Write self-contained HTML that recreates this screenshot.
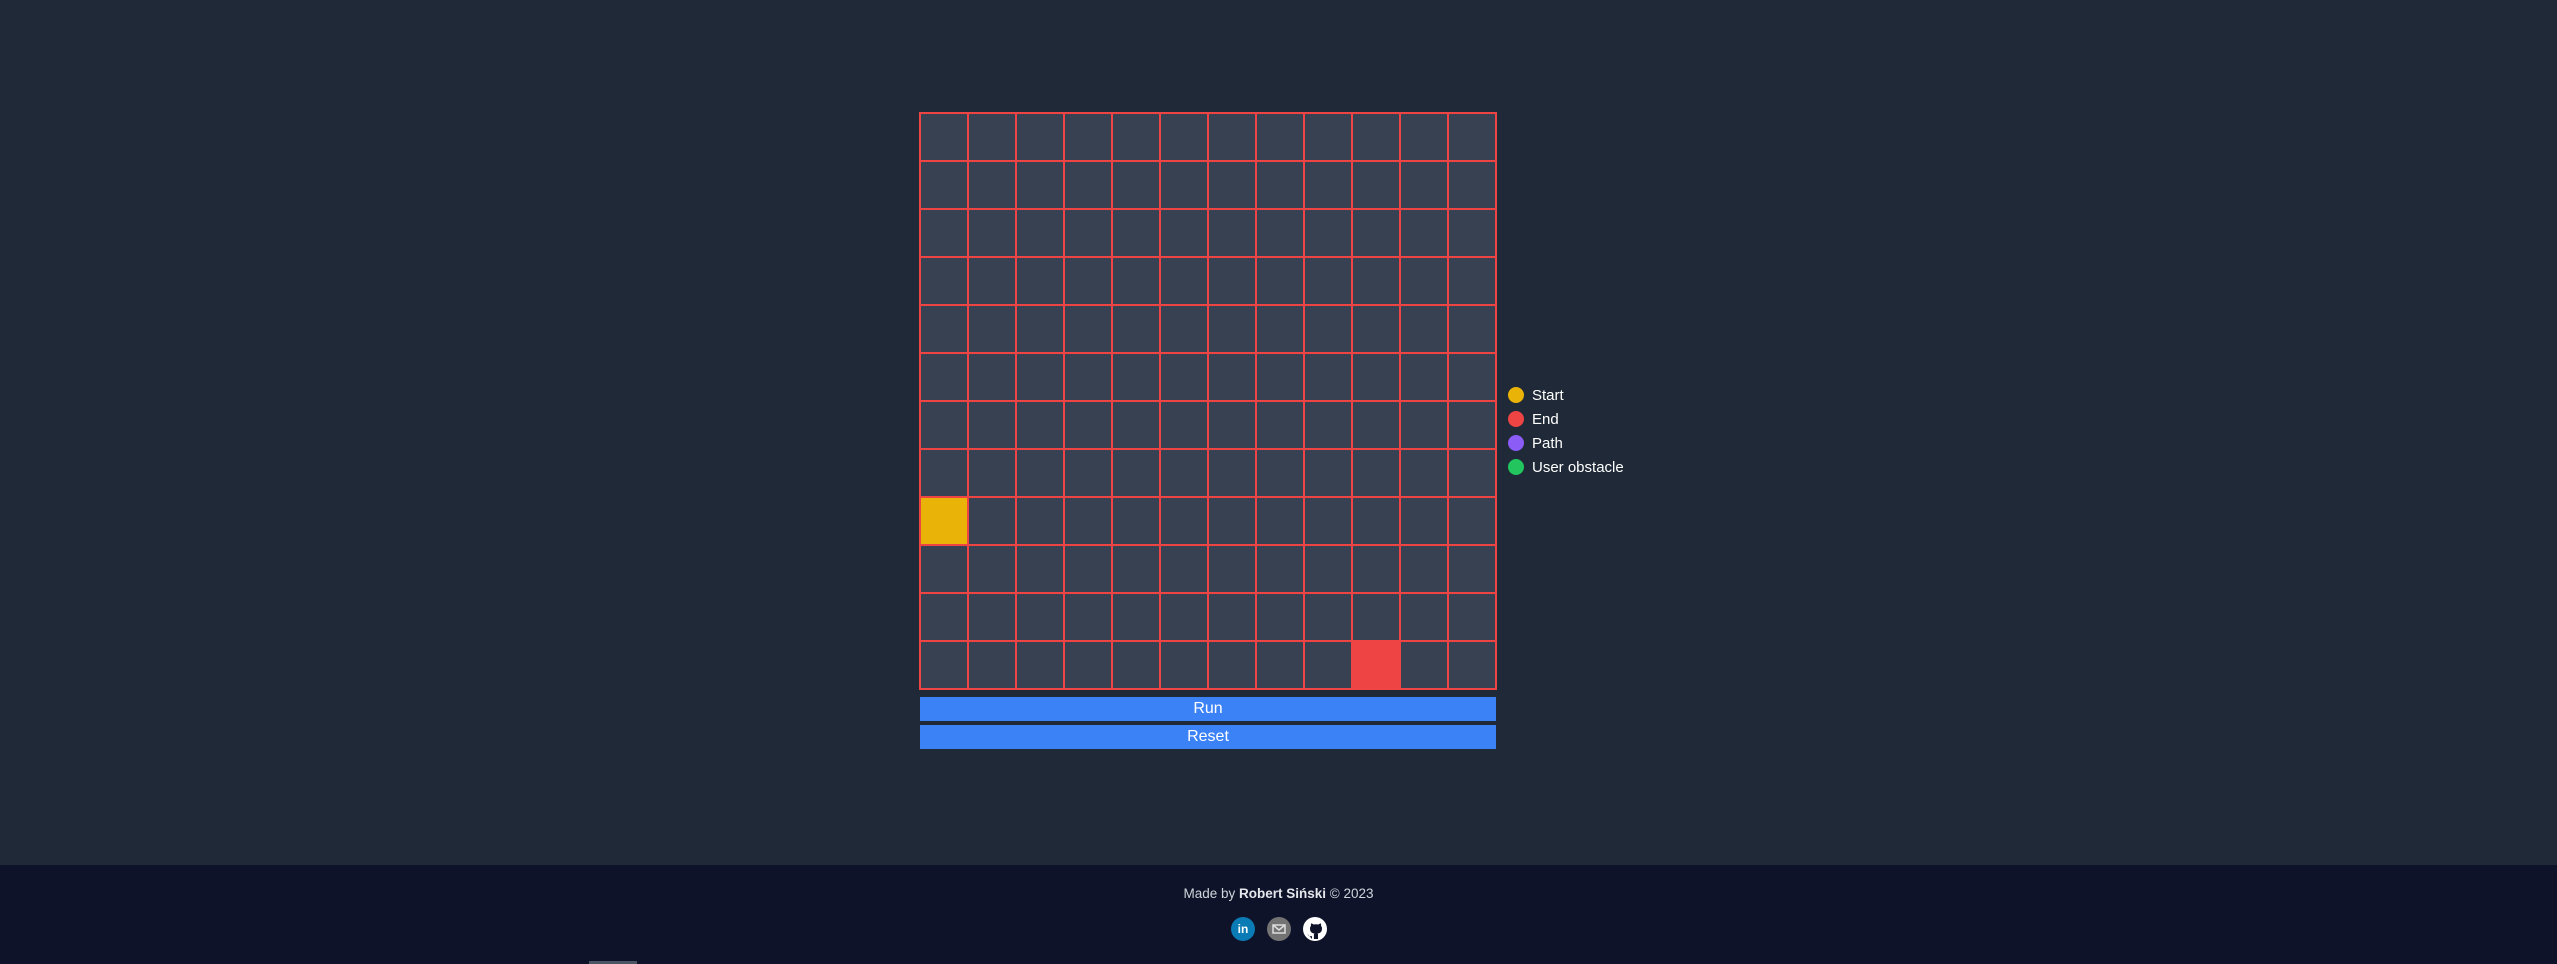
<!DOCTYPE html>
<html><head><meta charset="utf-8"><style>
*{margin:0;padding:0;box-sizing:border-box}
body{width:2557px;height:964px;background:#1f2937;font-family:"Liberation Sans",sans-serif;position:relative;overflow:hidden}
#grid{position:absolute;left:919px;top:112px;width:578px;height:578px;background:#ef4444;display:grid;grid-template-columns:repeat(12,46px);grid-template-rows:repeat(12,46px);gap:2px;padding:2px}
#grid div{background:#374151}
#grid div.s{background:#eab308}
#grid div.e{background:#ef4444}
.btn{position:absolute;left:920px;width:576px;height:24px;background:#3b82f6;color:#fff;font-size:16px;text-align:center;line-height:24px}
.leg{position:absolute;left:1508px;color:#fff;font-size:15px;line-height:24px;height:24px}
.leg span{display:inline-block;width:16px;height:16px;border-radius:50%;vertical-align:-3px;margin-right:8px}
footer{position:absolute;left:0;top:865px;width:2557px;height:99px;background:#0e1329;color:#d1d5db;font-size:13.5px;text-align:center}
.ic{position:absolute;top:917px;width:24px;height:24px;border-radius:50%}
</style></head><body>
<div id="grid">
<div></div><div></div><div></div><div></div><div></div><div></div><div></div><div></div><div></div><div></div><div></div><div></div>
<div></div><div></div><div></div><div></div><div></div><div></div><div></div><div></div><div></div><div></div><div></div><div></div>
<div></div><div></div><div></div><div></div><div></div><div></div><div></div><div></div><div></div><div></div><div></div><div></div>
<div></div><div></div><div></div><div></div><div></div><div></div><div></div><div></div><div></div><div></div><div></div><div></div>
<div></div><div></div><div></div><div></div><div></div><div></div><div></div><div></div><div></div><div></div><div></div><div></div>
<div></div><div></div><div></div><div></div><div></div><div></div><div></div><div></div><div></div><div></div><div></div><div></div>
<div></div><div></div><div></div><div></div><div></div><div></div><div></div><div></div><div></div><div></div><div></div><div></div>
<div></div><div></div><div></div><div></div><div></div><div></div><div></div><div></div><div></div><div></div><div></div><div></div>
<div class="s"></div><div></div><div></div><div></div><div></div><div></div><div></div><div></div><div></div><div></div><div></div><div></div>
<div></div><div></div><div></div><div></div><div></div><div></div><div></div><div></div><div></div><div></div><div></div><div></div>
<div></div><div></div><div></div><div></div><div></div><div></div><div></div><div></div><div></div><div></div><div></div><div></div>
<div></div><div></div><div></div><div></div><div></div><div></div><div></div><div></div><div></div><div class="e"></div><div></div><div></div>
</div>
<div class="btn" style="top:697px">Run</div>
<div class="btn" style="top:725px">Reset</div>
<div class="leg" style="top:384px"><span style="background:#eab308"></span>Start</div>
<div class="leg" style="top:408px"><span style="background:#ef4444"></span>End</div>
<div class="leg" style="top:432px"><span style="background:#8b5cf6"></span>Path</div>
<div class="leg" style="top:456px"><span style="background:#22c55e"></span>User obstacle</div>
<footer><div style="margin-top:21px">Made by <b style="color:#e5e7eb">Robert Siński</b> © 2023</div></footer>
<div class="ic" style="left:1231px;background:#0a7bb5;color:#fff;font-size:12px;font-weight:bold;text-align:center;line-height:24px">in</div>
<div class="ic" style="left:1267px;background:#737373"><svg width="24" height="24"><rect x="6" y="8" width="12" height="8" fill="none" stroke="#ddd" stroke-width="1.5"/><path d="M6 8l6 5 6-5" fill="none" stroke="#ddd" stroke-width="1.5"/></svg></div>
<div class="ic" style="left:1303px;background:#fff"><svg width="24" height="24"><path d="M9 22v-3c-3 1-4-1-4.5-2M15 22v-3.5c0-1 .2-1.5-.5-2 2.5-.3 4.5-1.3 4.5-5 0-1-.4-2-1-2.7.2-.6.2-1.5-.1-2.3 0 0-.8-.2-2.6 1a9 9 0 0 0-4.6 0C8.9 6.3 8.1 6.5 8.1 6.5c-.3.8-.3 1.7-.1 2.3-.6.7-1 1.7-1 2.7 0 3.7 2 4.7 4.5 5-.5.4-.6 1-.6 1.6V22" fill="#0e1329"/></svg></div>
<div style="position:absolute;left:589px;top:961px;width:48px;height:3px;background:#4b5563"></div>
</body></html>
